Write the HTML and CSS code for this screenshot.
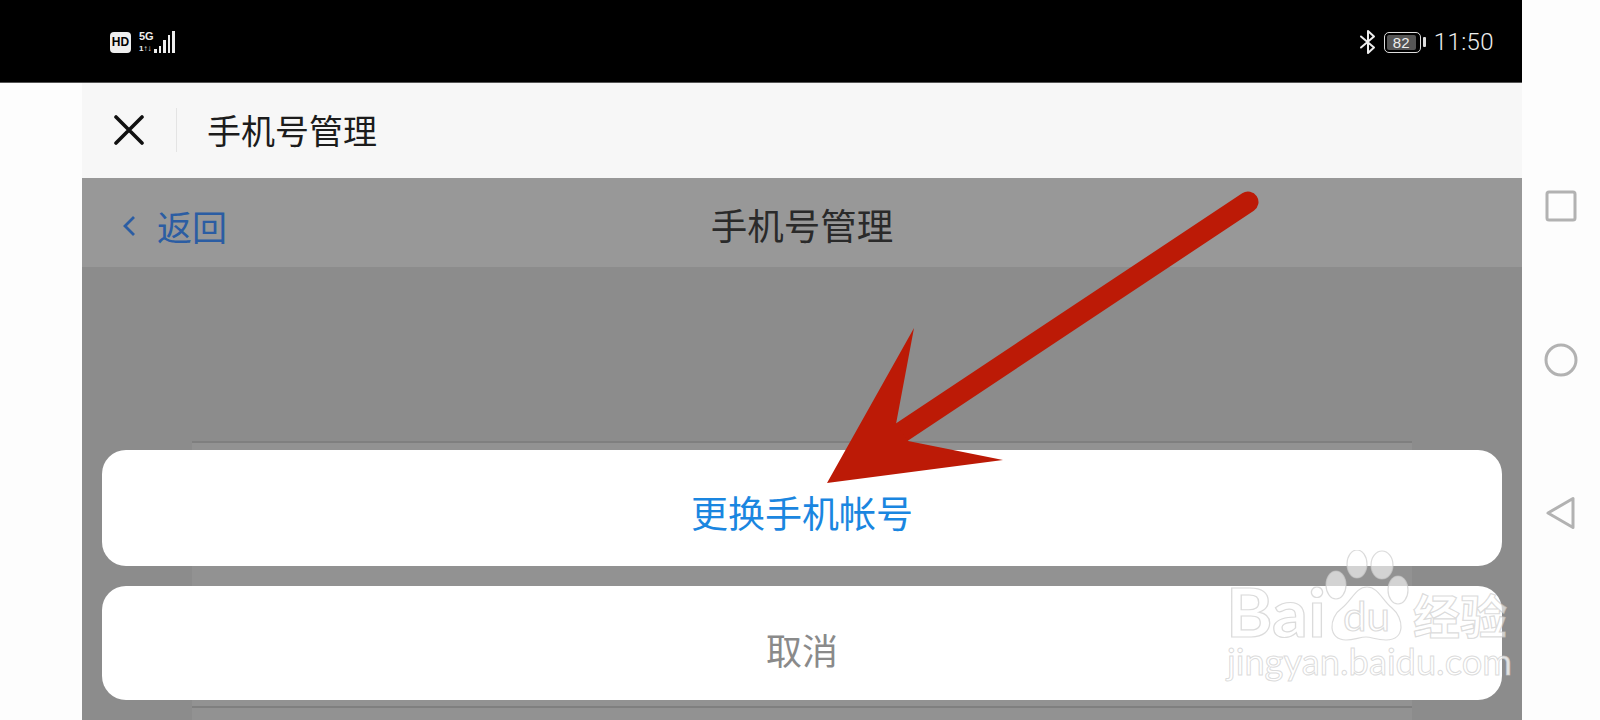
FILE: index.html
```html
<!DOCTYPE html>
<html lang="zh-CN">
<head>
    <meta charset="UTF-8">
    <meta name="viewport" content="width=device-width, initial-scale=1.0">
    <title>手机号管理</title>
    <link rel="stylesheet" href="styles.css">
</head>
<body>
    <div class="screen">
        <div class="status-bar">
            <div class="status-left">
                <span class="hd-badge">HD</span>
                <div class="network">
                    <span class="net-5g">5G</span>
                    <span class="net-data">1↑↓</span>
                </div>
                <div class="signal">
                    <i class="bar-1"></i><i class="bar-2"></i><i class="bar-3"></i><i class="bar-4"></i><i class="bar-5"></i>
                </div>
            </div>
            <div class="status-right">
                <svg class="bt-icon" width="18" height="26" viewBox="0 0 18 26">
                    <path d="M2 7.5 L15 18.5 L9 24 V2 L15 7.5 L2 18.5" fill="none" stroke="#eee" stroke-width="2" stroke-linejoin="round" stroke-linecap="round"/>
                </svg>
                <div class="battery"><span class="battery-level">82</span></div>
                <span class="battery-nub"></span>
                <span class="clock">11:50</span>
            </div>
        </div>

        <div class="app-row">
            <div class="gutter"></div>
            <div class="app">
                <div class="title-bar">
                    <svg class="close-icon" width="30" height="30" viewBox="0 0 30 30">
                        <path d="M2 2 L28 28 M28 2 L2 28" fill="none" stroke="#111" stroke-width="3.6" stroke-linecap="round"/>
                    </svg>
                    <span class="title-divider"></span>
                    <span class="title-text">手机号管理</span>
                </div>

                <div class="page">
                    <div class="nav-bar">
                        <div class="back">
                            <svg width="14" height="20" viewBox="0 0 14 20">
                                <path d="M12 1 L3 10 L12 19" fill="none" stroke="#2b5da3" stroke-width="2.8"/>
                            </svg>
                            <span>返回</span>
                        </div>
                        <span class="nav-title">手机号管理</span>
                    </div>
                    <div class="page-body">
                        <div class="list-block"></div>
                        <div class="list-block"></div>
                    </div>

                    <div class="action-sheet">
                        <div class="sheet-btn sheet-primary">更换手机帐号</div>
                        <div class="sheet-btn sheet-cancel">取消</div>
                    </div>
                </div>
            </div>
        </div>
    </div>

    <div class="nav-rail">
        <svg width="32" height="32" viewBox="0 0 32 32">
            <rect x="2" y="2" width="28" height="28" rx="2" fill="none" stroke="#b2b2b2" stroke-width="3"/>
        </svg>
        <svg width="34" height="34" viewBox="0 0 34 34">
            <circle cx="17" cy="17" r="15" fill="none" stroke="#b2b2b2" stroke-width="3"/>
        </svg>
        <svg class="nav-back" width="32" height="34" viewBox="0 0 32 34">
            <path d="M3 17 L28 2.500 V31.500 Z" fill="none" stroke="#b2b2b2" stroke-width="3" stroke-linejoin="round"/>
        </svg>
    </div>

    <!-- red arrow drawn over the screenshot -->
    <svg class="arrow" width="1600" height="720" viewBox="0 0 1600 720">
        <path d="M1248 202 L902 432" fill="none" stroke="#bc1a06" stroke-width="21" stroke-linecap="round"/>
        <path d="M827 483 L914 328 L896 424 L908 441 L1003 460 Z" fill="#bc1a06"/>
    </svg>

    <!-- site watermark -->
    <svg class="watermark" width="310" height="160" viewBox="1220 550 310 160">
        <g class="wm-shape">
            <ellipse cx="1357" cy="564" rx="10" ry="14"/>
            <ellipse cx="1382" cy="565" rx="11" ry="14"/>
            <ellipse cx="1336" cy="585" rx="10" ry="14"/>
            <ellipse cx="1398" cy="590" rx="10" ry="14"/>
            <path d="M1367 587 C1378 587 1382 600 1392 608 C1404 618 1406 640 1386 640 C1376 640 1372 637 1366 637 C1360 637 1354 640 1346 640 C1328 640 1328 618 1342 608 C1352 600 1356 587 1367 587 Z"/>
        </g>
        <text class="wm-text wm-big" x="1226" y="637" textLength="100" lengthAdjust="spacingAndGlyphs">Bai</text>
        <text class="wm-text wm-du" x="1343" y="631" textLength="47" lengthAdjust="spacingAndGlyphs">du</text>
        <text class="wm-text wm-cn" x="1413" y="634">经验</text>
        <text class="wm-text wm-url" x="1227" y="675" textLength="285" lengthAdjust="spacingAndGlyphs">jingyan.baidu.com</text>
    </svg>
</body>
</html>
```

FILE: styles.css
```css
html, body {
    margin: 0;
    padding: 0;
}
body {
    width: 1600px;
    height: 720px;
    overflow: hidden;
    display: flex;
    position: relative;
    background-color: #fdfdfd;
    font-family: "Noto Sans CJK SC", "Noto Sans", sans-serif;
}
.screen {
    width: 1522px;
    height: 720px;
    display: flex;
    flex-direction: column;
}

/* status bar */
.status-bar {
    height: 83px;
    flex-shrink: 0;
    background-color: #000;
    border-bottom: 1px solid #555;
    display: flex;
    justify-content: space-between;
    align-items: center;
    padding: 2px 28px 0 110px;
    box-sizing: border-box;
    color: #eee;
}
.status-left {
    display: flex;
    align-items: center;
}
.hd-badge {
    width: 21px;
    height: 21px;
    background-color: #eee;
    border-radius: 4px;
    color: #000;
    font-family: "Liberation Sans", sans-serif;
    font-size: 12px;
    font-weight: bold;
    line-height: 21px;
    text-align: center;
}
.network {
    width: 15px;
    margin-left: 8px;
    display: flex;
    flex-direction: column;
    gap: 3px;
    font-family: "Liberation Sans", sans-serif;
    font-weight: bold;
}
.net-5g {
    font-size: 11px;
    line-height: 11px;
}
.net-data {
    font-size: 8px;
    line-height: 8px;
    white-space: nowrap;
}
.signal {
    display: flex;
    align-items: flex-end;
    gap: 2px;
    height: 22px;
}
.signal i {
    display: block;
    width: 2.500px;
    background-color: #eee;
}
.bar-1 { height: 4px; }
.bar-2 { height: 7px; }
.bar-3 { height: 13px; }
.bar-4 { height: 18px; }
.bar-5 { height: 22px; }

.status-right {
    display: flex;
    align-items: center;
}
.bt-icon {
    margin-right: 7px;
}
.battery {
    width: 37px;
    height: 21px;
    box-sizing: border-box;
    border: 1.5px solid #ddd;
    border-radius: 5px;
    padding: 2px 4px 2px 2px;
    display: flex;
}
.battery-level {
    flex: 1;
    background-color: #555;
    border-radius: 2px;
    color: #eee;
    font-family: "Liberation Sans", sans-serif;
    font-size: 15px;
    line-height: 15px;
    text-align: center;
}
.battery-nub {
    width: 3px;
    height: 10px;
    margin-left: 2px;
    background-color: #ddd;
    border-radius: 1px;
}
.clock {
    margin-left: 8px;
    font-family: Roboto, sans-serif;
    font-size: 24px;
    font-weight: 300;
    letter-spacing: 0.4px;
}

/* app area */
.app-row {
    flex: 1;
    min-height: 0;
    display: flex;
}
.gutter {
    width: 82px;
    flex-shrink: 0;
}
.app {
    flex: 1;
    min-height: 0;
    display: flex;
    flex-direction: column;
}
.title-bar {
    height: 95px;
    flex-shrink: 0;
    background-color: #f7f7f7;
    display: flex;
    align-items: center;
    padding: 0 0 2px 32px;
    box-sizing: border-box;
}
.title-divider {
    width: 1px;
    height: 44px;
    margin-left: 32px;
    background-color: #e4e4e4;
}
.title-text {
    margin-left: 30px;
    font-size: 34px;
    color: #1c1c1c;
    line-height: 1;
}

.page {
    flex: 1;
    min-height: 0;
    position: relative;
    background-color: #8c8c8c;
    overflow: hidden;
}
.nav-bar {
    height: 89px;
    padding-top: 6px;
    box-sizing: border-box;
    background-color: #989898;
    display: flex;
    align-items: center;
    justify-content: center;
    position: relative;
}
.back {
    position: absolute;
    left: 40px;
    top: 6px;
    bottom: 0;
    display: flex;
    align-items: center;
    gap: 21px;
    color: #2b5da3;
    font-size: 35px;
    line-height: 1;
}
.nav-title {
    font-size: 36.500px;
    color: #2a2a2a;
    line-height: 1;
}
.page-body {
    height: 453px;
    padding: 174px 110px 0;
    box-sizing: border-box;
    overflow: hidden;
}
.list-block {
    height: 263px;
    background-color: #929292;
    border-top: 2px solid #7f7f7f;
}

.action-sheet {
    position: absolute;
    left: 20px;
    right: 20px;
    top: 272px;
    display: flex;
    flex-direction: column;
    gap: 20px;
}
.sheet-btn {
    background-color: #fff;
    border-radius: 24px;
    display: flex;
    align-items: center;
    justify-content: center;
    box-sizing: border-box;
    line-height: 1;
}
.sheet-primary {
    height: 116px;
    padding-top: 9px;
    font-size: 37px;
    color: #1a86e0;
}
.sheet-cancel {
    height: 114px;
    padding-top: 11px;
    font-size: 36px;
    color: #8a8a8a;
}

/* android nav buttons on the right */
.nav-rail {
    width: 78px;
    padding-top: 190px;
    display: flex;
    flex-direction: column;
    align-items: center;
    gap: 121px;
}
.nav-back {
    margin-top: -2px;
}

.arrow {
    position: absolute;
    left: 0;
    top: 0;
}
.watermark {
    position: absolute;
    left: 1220px;
    top: 550px;
}
.wm-shape ellipse, .wm-shape path, .wm-text {
    fill: rgba(255, 255, 255, 0.6);
    stroke: rgba(200, 200, 200, 0.65);
    stroke-width: 1.2px;
}
.wm-text {
    font-family: Lato, sans-serif;
}
.wm-big {
    font-size: 66px;
    font-weight: 700;
}
.wm-du {
    font-size: 40px;
    fill: #fff;
}
.wm-cn {
    font-family: "Noto Sans CJK SC", sans-serif;
    font-size: 47px;
    font-weight: 700;
}
.wm-url {
    font-size: 36px;
    font-weight: 400;
    stroke-width: 1px;
    fill: rgba(255, 255, 255, 0.75);
}
```
